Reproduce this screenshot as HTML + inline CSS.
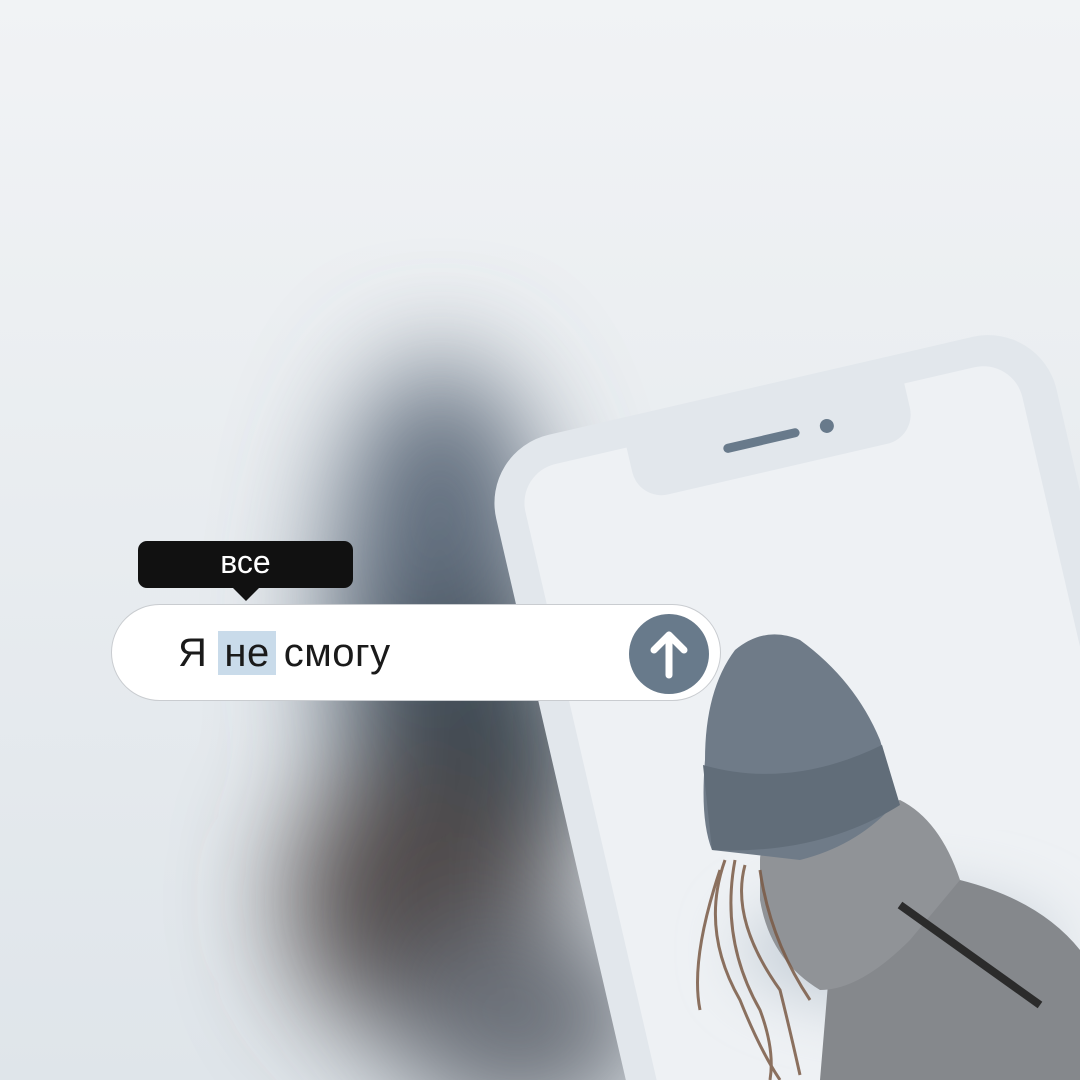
<!DOCTYPE html>
<html><head><meta charset="utf-8"><style>
html,body{margin:0;padding:0;overflow:hidden;width:1080px;height:1080px}
body{position:relative;background:#e9edf0;font-family:"Liberation Sans","DejaVu Sans",sans-serif}
svg{position:absolute;left:0;top:0}
.tip{position:absolute;left:138px;top:541px;width:215px;height:47px;background:#111;border-radius:9px;color:#fff;font-size:32px;text-align:center;line-height:42px}
.tip:after{content:"";position:absolute;left:95px;bottom:-13px;border:13px solid transparent;border-bottom:0;border-top-color:#111}
.bar{position:absolute;left:111px;top:604px;width:610px;height:97px;background:#fff;border:1px solid #c9ccd0;border-radius:49px;box-sizing:border-box}
.txt{position:absolute;left:178px;top:627px;font-size:40px;color:#1a1a1a;line-height:53px;white-space:nowrap;letter-spacing:0.5px}
.hl{background:#c9dbea;padding:0 6px;margin:0 8px 0 11px}
.btn{position:absolute;left:629px;top:614px;width:80px;height:80px;border-radius:50%;background:#687a8b}
</style></head><body>
<svg width="1080" height="1080" viewBox="0 0 1080 1080">
<defs>
<filter id="b1" x="-50%" y="-50%" width="200%" height="200%"><feGaussianBlur stdDeviation="55"/></filter>
<filter id="b2" x="-50%" y="-50%" width="200%" height="200%"><feGaussianBlur stdDeviation="30"/></filter>
<linearGradient id="bg" x1="0" y1="0" x2="0" y2="1"><stop offset="0" stop-color="#f1f3f5"/><stop offset="1" stop-color="#dfe5ea"/></linearGradient>
<clipPath id="scr"><rect x="515" y="480" width="510" height="900" rx="40" transform="rotate(-13 485 470)"/></clipPath>
</defs>
<rect width="1080" height="1080" fill="url(#bg)"/>
<g filter="url(#b1)">
<ellipse cx="440" cy="620" rx="110" ry="260" fill="#5e6c7b"/>
<ellipse cx="470" cy="760" rx="120" ry="160" fill="#3e4853"/>
<ellipse cx="420" cy="900" rx="130" ry="140" fill="#4f4a48"/>
<ellipse cx="520" cy="1020" rx="130" ry="100" fill="#6b7078"/>
</g>
<g transform="rotate(-13 485 470)">
<rect x="485" y="450" width="575" height="1000" rx="70" fill="#e2e7ec"/>
<rect x="515" y="480" width="510" height="900" rx="40" fill="#eef1f4"/>
<path d="M628 475 h285 v30 a30 30 0 0 1 -30 30 h-225 a30 30 0 0 1 -30 -30z" fill="#e2e7ec"/>
<rect x="722" y="499" width="78" height="9" rx="4.5" fill="#687a8b"/>
<circle cx="828" cy="504" r="7" fill="#687a8b"/>
</g>
<g clip-path="url(#scr)">
<g filter="url(#b2)"><ellipse cx="900" cy="950" rx="160" ry="60" fill="#c9d2da"/></g>
<path d="M820 1080 L830 960 Q880 900 960 880 Q1040 900 1080 950 L1080 1080Z" fill="#85888c"/>
<path d="M760 860 Q760 830 820 820 L900 800 Q940 820 960 880 L910 940 Q860 990 820 990 Q770 960 760 900Z" fill="#909397"/>
<g stroke="#7a5a45" stroke-width="3" fill="none" opacity="0.85">
<path d="M725 860 Q700 930 740 1000 Q760 1050 780 1080"/>
<path d="M735 860 Q720 940 760 1010 Q775 1050 770 1080"/>
<path d="M745 865 Q730 920 780 990 Q790 1030 800 1075"/>
<path d="M720 870 Q690 960 700 1010"/>
<path d="M760 870 Q770 940 810 1000"/>
</g>
<path d="M705 760 Q705 690 735 650 Q765 625 800 640 Q855 680 880 740 L898 800 Q860 845 800 860 L712 850 Q700 820 705 760Z" fill="#6f7b88"/>
<path d="M703 765 Q790 790 882 745 L900 805 Q820 855 712 850Z" fill="#616d79"/>
<path d="M900 905 L1040 1005" stroke="#2b2b2b" stroke-width="8"/>
</g>
</svg>
<div class="tip">все</div>
<div class="bar"></div>
<div class="txt">Я<span class="hl">не</span>смогу</div>
<div class="btn"><svg width="80" height="80" viewBox="0 0 80 80"><path d="M40 61V21M25 36L40 21L55 36" stroke="#fff" stroke-width="7" fill="none" stroke-linecap="round" stroke-linejoin="round"/></svg></div>
</body></html>
